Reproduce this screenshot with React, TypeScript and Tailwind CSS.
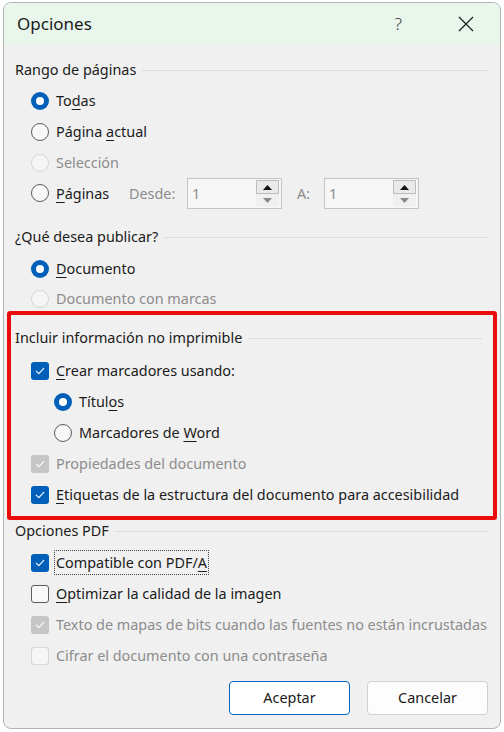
import React from "react";

type Mark = "on" | "off" | "disabled" | "disabled-on";

const font = "font-['Segoe_UI','Noto_Sans',sans-serif]";

// Access key letter, drawn underlined like the Win32 dialog
const K = ({ children }: { children: React.ReactNode }) => (
  <span className="underline underline-offset-[3px] decoration-1">{children}</span>
);

const Radio = ({ state }: { state: Mark }) => {
  if (state === "on") {
    return (
      <span className="flex h-[18px] w-[18px] shrink-0 items-center justify-center rounded-full bg-[#005fb8]">
        <span className="h-[8px] w-[8px] rounded-full bg-white" />
      </span>
    );
  }
  const disabled = state === "disabled";
  return (
    <span
      className={`h-[18px] w-[18px] shrink-0 rounded-full border ${
        disabled ? "border-[#d4d4d4] bg-[#f5f5f5]" : "border-[#5c5c5c] bg-[#f8f8f8]"
      }`}
    />
  );
};

const Check = ({ state }: { state: Mark }) => {
  const tick = (
    <svg width="10" height="8" viewBox="0 0 10 8" fill="none">
      <path d="M1.2 4.2 L3.8 6.6 L8.8 1.4" stroke="white" strokeWidth="1.1" strokeLinecap="round" strokeLinejoin="round" />
    </svg>
  );
  if (state === "on")
    return (
      <span className="flex h-[18px] w-[18px] shrink-0 items-center justify-center rounded-[3px] bg-[#005fb8]">{tick}</span>
    );
  if (state === "disabled-on")
    return (
      <span className="flex h-[18px] w-[18px] shrink-0 items-center justify-center rounded-[3px] bg-[#c6c6c6]">{tick}</span>
    );
  if (state === "disabled")
    return <span className="h-[18px] w-[18px] shrink-0 rounded-[3px] border border-[#d6d6d6] bg-[#f6f6f6]" />;
  return <span className="h-[18px] w-[18px] shrink-0 rounded-[3px] border border-[#5c5c5c] bg-[#f8f8f8]" />;
};

type RowProps = {
  kind: "radio" | "check";
  state: Mark;
  indent?: string;
  h?: string;
  children: React.ReactNode;
};

const Row = ({ kind, state, indent = "pl-[16px]", h = "h-[31px]", children }: RowProps) => {
  const dim = state === "disabled" || state === "disabled-on";
  return (
    <div className={`flex ${h} items-center gap-[7px] ${indent}`}>
      {kind === "radio" ? <Radio state={state} /> : <Check state={state} />}
      <span className={dim ? "text-[#8c8c8c]" : "text-[#1b1b1b]"}>{children}</span>
    </div>
  );
};

const GroupTitle = ({ children }: { children: React.ReactNode }) => (
  <div className="flex h-[20px] items-center gap-[6px] pr-[11px]">
    <span className="text-[#1b1b1b]">{children}</span>
    <span className="h-px flex-1 bg-[#dcdcdc]" />
  </div>
);

const Spin = () => (
  <div className="flex h-[31px] w-[95px] items-center justify-between border border-[#c4c4c4] bg-[#f6f6f6] pl-[4px] pr-[2px]">
    <span className="text-[#8c8c8c]">1</span>
    <div className="flex h-[27px] w-[23px] flex-col">
      <div className="flex h-[14px] items-center justify-center border border-[#bdbdbd] bg-[#e9e9e9]">
        <svg width="9" height="5" viewBox="0 0 9 5">
          <path d="M0 5 L4.5 0 L9 5 Z" fill="#111" />
        </svg>
      </div>
      <div className="flex h-[13px] items-center justify-center bg-[#f0f0f0]">
        <svg width="9" height="5" viewBox="0 0 9 5">
          <path d="M0 0 L9 0 L4.5 5 Z" fill="#8a8a8a" />
        </svg>
      </div>
    </div>
  </div>
);

export default function App() {
  return (
    <div className={`h-[732px] w-[504px] bg-white pl-[3px] pt-[2px] ${font} text-[14.4px]`}>
      <div className="flex h-[727px] w-[498px] flex-col overflow-hidden rounded-[8px] border border-[#b4b4b4] bg-[#f0f0f0]">
        {/* title bar */}
        <div className="flex h-[42px] shrink-0 items-center bg-[#e8f6ec] pl-[13px] pr-[26px]">
          <span className="flex-1 text-[17px] text-[#1b1b1b]">Opciones</span>
          <span className="mr-[56px] text-[17px] font-light text-[#333]">?</span>
          <svg width="16" height="16" viewBox="0 0 16 16">
            <path d="M1 1 L15 15 M15 1 L1 15" stroke="#222" strokeWidth="1.3" />
          </svg>
        </div>

        <div className="flex flex-col pl-[11px]">
          <div className="mt-[15px]">
            <GroupTitle>Rango de páginas</GroupTitle>
          </div>
          <div className="mt-[5px]">
            <Row kind="radio" state="on">
              To<K>d</K>as
            </Row>
            <Row kind="radio" state="off">
              Página <K>a</K>ctual
            </Row>
            <Row kind="radio" state="disabled">
              Selección
            </Row>
            <div className="flex h-[31px] items-center pl-[16px]">
              <div className="flex w-[98px] items-center gap-[7px]">
                <Radio state="off" />
                <span className="text-[#1b1b1b]">
                  <K>P</K>áginas
                </span>
              </div>
              <span className="w-[58px] text-[#8c8c8c]">Desde:</span>
              <Spin />
              <span className="w-[42px] pl-[15px] text-[#8c8c8c]">A:</span>
              <Spin />
            </div>
          </div>

          <div className="mt-[18px]">
            <GroupTitle>¿Qué desea publicar?</GroupTitle>
          </div>
          <div className="mt-[7px]">
            <Row kind="radio" state="on" h="h-[30px]">
              <K>D</K>ocumento
            </Row>
            <Row kind="radio" state="disabled" h="h-[30px]">
              Documento con marcas
            </Row>
          </div>

          {/* highlighted group */}
          <div className="-mt-[3px] ml-[-8px] mr-[3px] rounded-[3px] border-[4px] border-[#ec0c0c] pb-[6px] pl-[4px] pt-[13px]">
            <GroupTitle>Incluir información no imprimible</GroupTitle>
            <div className="mt-[7px]">
              <Row kind="check" state="on">
                <K>C</K>rear marcadores usando:
              </Row>
              <Row kind="radio" state="on" indent="pl-[39px]">
                Títul<K>o</K>s
              </Row>
              <Row kind="radio" state="off" indent="pl-[39px]">
                Marcadores de <K>W</K>ord
              </Row>
              <Row kind="check" state="disabled-on">
                Propiedades del documento
              </Row>
              <Row kind="check" state="on">
                <K>E</K>tiquetas de la estructura del documento para accesibilidad
              </Row>
            </div>
          </div>

          <div className="mt-[1px]">
            <GroupTitle>Opciones PDF</GroupTitle>
          </div>
          <div className="mt-[6px]">
            <div className="flex h-[31px] items-center gap-[5px] pl-[16px]">
              <Check state="on" />
              <span className="border border-dotted border-[#444] px-[1px] py-[1px] text-[#1b1b1b]">
                Compatible con PDF/<K>A</K>
              </span>
            </div>
            <Row kind="check" state="off">
              <K>O</K>ptimizar la calidad de la imagen
            </Row>
            <Row kind="check" state="disabled-on">
              Texto de mapas de bits cuando las fuentes no están incrustadas
            </Row>
            <Row kind="check" state="disabled">
              Cifrar el documento con una contraseña
            </Row>
          </div>

          <div className="mt-[10px] flex justify-end gap-[17px] pr-[12px]">
            <button className="h-[34px] w-[121px] rounded-[4px] border border-[#0067c0] bg-white text-[#1b1b1b]">
              Aceptar
            </button>
            <button className="h-[34px] w-[121px] rounded-[4px] border border-[#d0d0d0] bg-[#fdfdfd] text-[#1b1b1b]">
              Cancelar
            </button>
          </div>
        </div>
      </div>
    </div>
  );
}
